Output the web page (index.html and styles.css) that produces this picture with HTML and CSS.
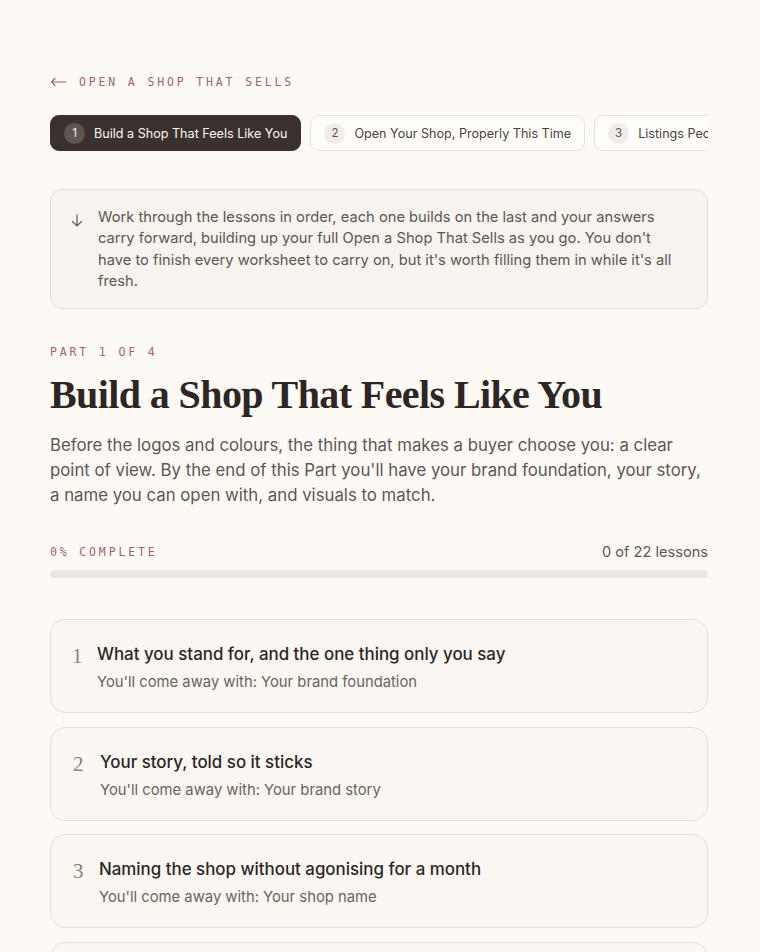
FILE: index.html
```html
<!DOCTYPE html>
<html lang="en">
<head>
<meta charset="utf-8">
<title>Build a Shop That Feels Like You</title>
<link rel="stylesheet" href="styles.css">
</head>
<body>
<main class="page">
  <a class="back" href="#"><span class="back-arrow"><svg width="17" height="10" viewBox="0 0 17 10" fill="none" stroke="#a5616a" stroke-width="1.2" stroke-linecap="round" stroke-linejoin="round"><path d="M16 5H1.5M5 1.5 1.5 5 5 8.5"/></svg></span>OPEN A SHOP THAT SELLS</a>

  <nav class="tabs">
    <div class="tab tab-active"><span class="tab-num">1</span>Build a Shop That Feels Like You</div>
    <div class="tab"><span class="tab-num">2</span>Open Your Shop, Properly This Time</div>
    <div class="tab"><span class="tab-num">3</span>Listings People Actually Click</div>
  </nav>

  <div class="note">
    <span class="note-icon">
      <svg width="12" height="13" viewBox="0 0 12 13" fill="none" stroke="#6b635e" stroke-width="1.3" stroke-linecap="round" stroke-linejoin="round"><path d="M6 1v11M1.5 7.5 6 12l4.5-4.5"/></svg>
    </span>
    <p>Work through the lessons in order, each one builds on the last and your answers carry forward, building up your full Open a Shop That Sells as you go. You don't have to finish every worksheet to carry on, but it's worth filling them in while it's all fresh.</p>
  </div>

  <div class="eyebrow">PART 1 OF 4</div>
  <h1 class="title">Build a Shop That Feels Like You</h1>
  <p class="lead">Before the logos and colours, the thing that makes a buyer choose you: a clear point of view. By the end of this Part you'll have your brand foundation, your story, a name you can open with, and visuals to match.</p>

  <div class="progress-head">
    <span class="eyebrow eyebrow-inline">0% COMPLETE</span>
    <span class="progress-count">0 of 22 lessons</span>
  </div>
  <div class="progress-bar"><div class="progress-fill" style="width:0%"></div></div>

  <ol class="lessons">
    <li class="lesson">
      <span class="lesson-num">1</span>
      <div class="lesson-body">
        <div class="lesson-title">What you stand for, and the one thing only you say</div>
        <div class="lesson-sub">You'll come away with: Your brand foundation</div>
      </div>
    </li>
    <li class="lesson">
      <span class="lesson-num num-wide">2</span>
      <div class="lesson-body">
        <div class="lesson-title">Your story, told so it sticks</div>
        <div class="lesson-sub">You'll come away with: Your brand story</div>
      </div>
    </li>
    <li class="lesson">
      <span class="lesson-num num-mid">3</span>
      <div class="lesson-body">
        <div class="lesson-title">Naming the shop without agonising for a month</div>
        <div class="lesson-sub">You'll come away with: Your shop name</div>
      </div>
    </li>
    <li class="lesson">
      <span class="lesson-num num-wide">4</span>
      <div class="lesson-body">
        <div class="lesson-title">Visuals that match the voice</div>
        <div class="lesson-sub">You'll come away with: Your visual identity</div>
      </div>
    </li>
  </ol>
</main>
</body>
</html>
```

FILE: styles.css
```css
* { box-sizing: border-box; }
html, body { margin: 0; padding: 0; }
body {
  background: #fdfaf6;
  font-family: Inter, "Noto Sans", sans-serif;
  color: #2d2624;
  overflow: hidden;
}
.page {
  width: 658px;
  margin: 0 0 0 50px;
  padding-top: 74px;
}
.back {
  display: flex;
  align-items: center;
  font-family: "DejaVu Sans Mono", monospace;
  font-size: 11.5px;
  letter-spacing: 2.85px;
  color: #a5616a;
  text-decoration: none;
  height: 16px;
}
.back-arrow {
  display: flex;
  margin-right: 12px;
}
.tabs {
  display: flex;
  gap: 9px;
  margin-top: 25px;
  overflow: hidden;
  white-space: nowrap;
}
.tab {
  flex: none;
  display: flex;
  align-items: center;
  height: 36px;
  padding: 0 13px 0 13px;
  border: 1px solid #e7e1db;
  border-radius: 9px;
  background: #fffdfa;
  font-size: 12.6px;
  color: #4a423f;
}
.tab-active {
  background: #3a302d;
  border-color: #3a302d;
  color: #fbf7f3;
}
.tab-num {
  width: 21px;
  height: 21px;
  border-radius: 50%;
  background: #f1ece7;
  color: #5a524e;
  font-size: 11.5px;
  display: flex;
  align-items: center;
  justify-content: center;
  margin-right: 9px;
}
.tab-active .tab-num {
  background: #5f5652;
  color: #f3eee9;
}
.note {
  display: flex;
  margin-top: 38px;
  background: #f7f3ee;
  border: 1px solid #e6e0da;
  border-radius: 12px;
  padding: 17px 24px 16px 20px;
}
.note-icon {
  flex: none;
  width: 27px;
  padding-top: 4px;
}
.note p {
  margin: 0;
  font-size: 14.7px;
  line-height: 21.3px;
  color: #5d5652;
}
.eyebrow {
  font-family: "DejaVu Sans Mono", monospace;
  font-size: 11.5px;
  letter-spacing: 2.85px;
  color: #a5616a;
  margin-top: 35px;
  line-height: 16px;
}
.eyebrow-inline { margin-top: 0; }
.title {
  font-family: "Liberation Serif", serif;
  font-weight: 700;
  font-size: 40px;
  letter-spacing: -0.6px;
  line-height: 48px;
  margin: 11px 0 0;
  color: #2d2624;
}
.lead {
  margin: 14px 0 0;
  font-size: 16.8px;
  line-height: 25px;
  color: #5d5652;
}
.progress-head {
  display: flex;
  justify-content: space-between;
  align-items: center;
  margin-top: 35px;
}
.progress-count {
  font-size: 14.6px;
  color: #5d5652;
}
.progress-bar {
  margin-top: 9px;
  height: 8px;
  border-radius: 4px;
  background: #ebe6e1;
  overflow: hidden;
}
.progress-fill { height: 100%; background: #a5616a; }
.lessons {
  list-style: none;
  margin: 41px 0 0;
  padding: 0;
  display: flex;
  flex-direction: column;
  gap: 13.5px;
}
.lesson {
  display: flex;
  align-items: flex-start;
  gap: 14px;
  height: 94px;
  padding: 22px 22px 0 21px;
  background: #faf6f2;
  border: 1px solid #e6e0da;
  border-radius: 15px;
}
.lesson-num {
  font-family: "Liberation Serif", serif;
  font-size: 21px;
  color: #8a817c;
  line-height: 26px;
  margin-top: 1px;
  width: 11px;
  flex: none;
}
.num-wide { width: 14px; padding-left: 1px; }
.num-mid { width: 13px; padding-left: 1px; }
.lesson-title {
  font-size: 16.9px;
  font-weight: 500;
  line-height: 24px;
  color: #2d2624;
}
.lesson-sub {
  margin-top: 6px;
  font-size: 14.8px;
  line-height: 20px;
  color: #6b635e;
}
```
